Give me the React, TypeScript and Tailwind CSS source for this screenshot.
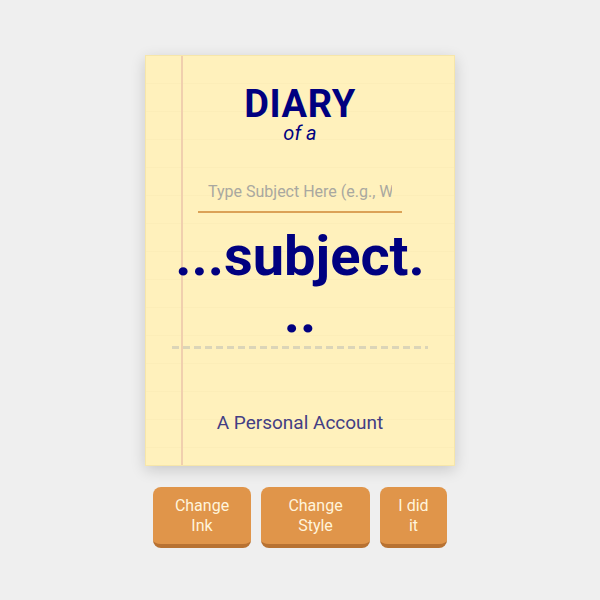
import React from "react";

export default function App() {
  return (
    <div className="min-h-screen w-full bg-[#efefef] flex flex-col items-center pt-[55px] font-['Roboto',_'Liberation_Sans',_sans-serif]">
      <div className="relative w-[310px] h-[411px] bg-[#fff1bc] shadow-[0_4px_14px_rgba(0,0,0,0.16)] border border-[#f6e6aa] bg-[repeating-linear-gradient(to_bottom,transparent_0px,transparent_27px,rgba(180,160,90,0.045)_27px,rgba(180,160,90,0.045)_28px)]">
        <div className="absolute top-0 bottom-0 left-[35px] w-[2px] bg-[#f0cfae]" />
        <div className="relative flex flex-col items-center pt-[29px]">
          <div className="text-[38px] leading-none font-bold text-[#000080] tracking-[0.6px]">DIARY</div>
          <div className="text-[20px] leading-none italic text-[#000080]">of a</div>
          <input
            className="mt-[28px] w-[204px] h-[42px] bg-transparent border-b-2 border-[#dba257] px-[10px] text-[16px] text-[#333] placeholder:text-[#a9a8a0] outline-none"
            placeholder="Type Subject Here (e.g., Work)"
          />
          <div className="mt-[15px] w-[256px] text-center text-[56px] leading-[57px] font-bold text-[#000080]">
            ...subject.
            <br />
            ..
          </div>
          <div className="mt-[4px] w-[256px] h-[3px] bg-[repeating-linear-gradient(to_right,#dbd5b8_0px,#dbd5b8_7px,transparent_7px,transparent_11px)]" />
          <div className="mt-[60px] text-[19px] leading-[28px] text-[#433e84]">A Personal Account</div>
        </div>
      </div>
      <div className="mt-[21px] flex gap-[10px]">
        <button className="w-[98px] h-[61px] rounded-lg bg-[#e0954a] border-b-4 border-[#b87232] text-[#fff4dc] text-[16px] leading-5 flex items-center justify-center text-center px-2">
          Change
          <br />
          Ink
        </button>
        <button className="w-[109px] h-[61px] rounded-lg bg-[#e0954a] border-b-4 border-[#b87232] text-[#fff4dc] text-[16px] leading-5 flex items-center justify-center text-center px-2">
          Change
          <br />
          Style
        </button>
        <button className="w-[67px] h-[61px] rounded-lg bg-[#e0954a] border-b-4 border-[#b87232] text-[#fff4dc] text-[16px] leading-5 flex items-center justify-center text-center px-2">
          I did
          <br />
          it
        </button>
      </div>
    </div>
  );
}
